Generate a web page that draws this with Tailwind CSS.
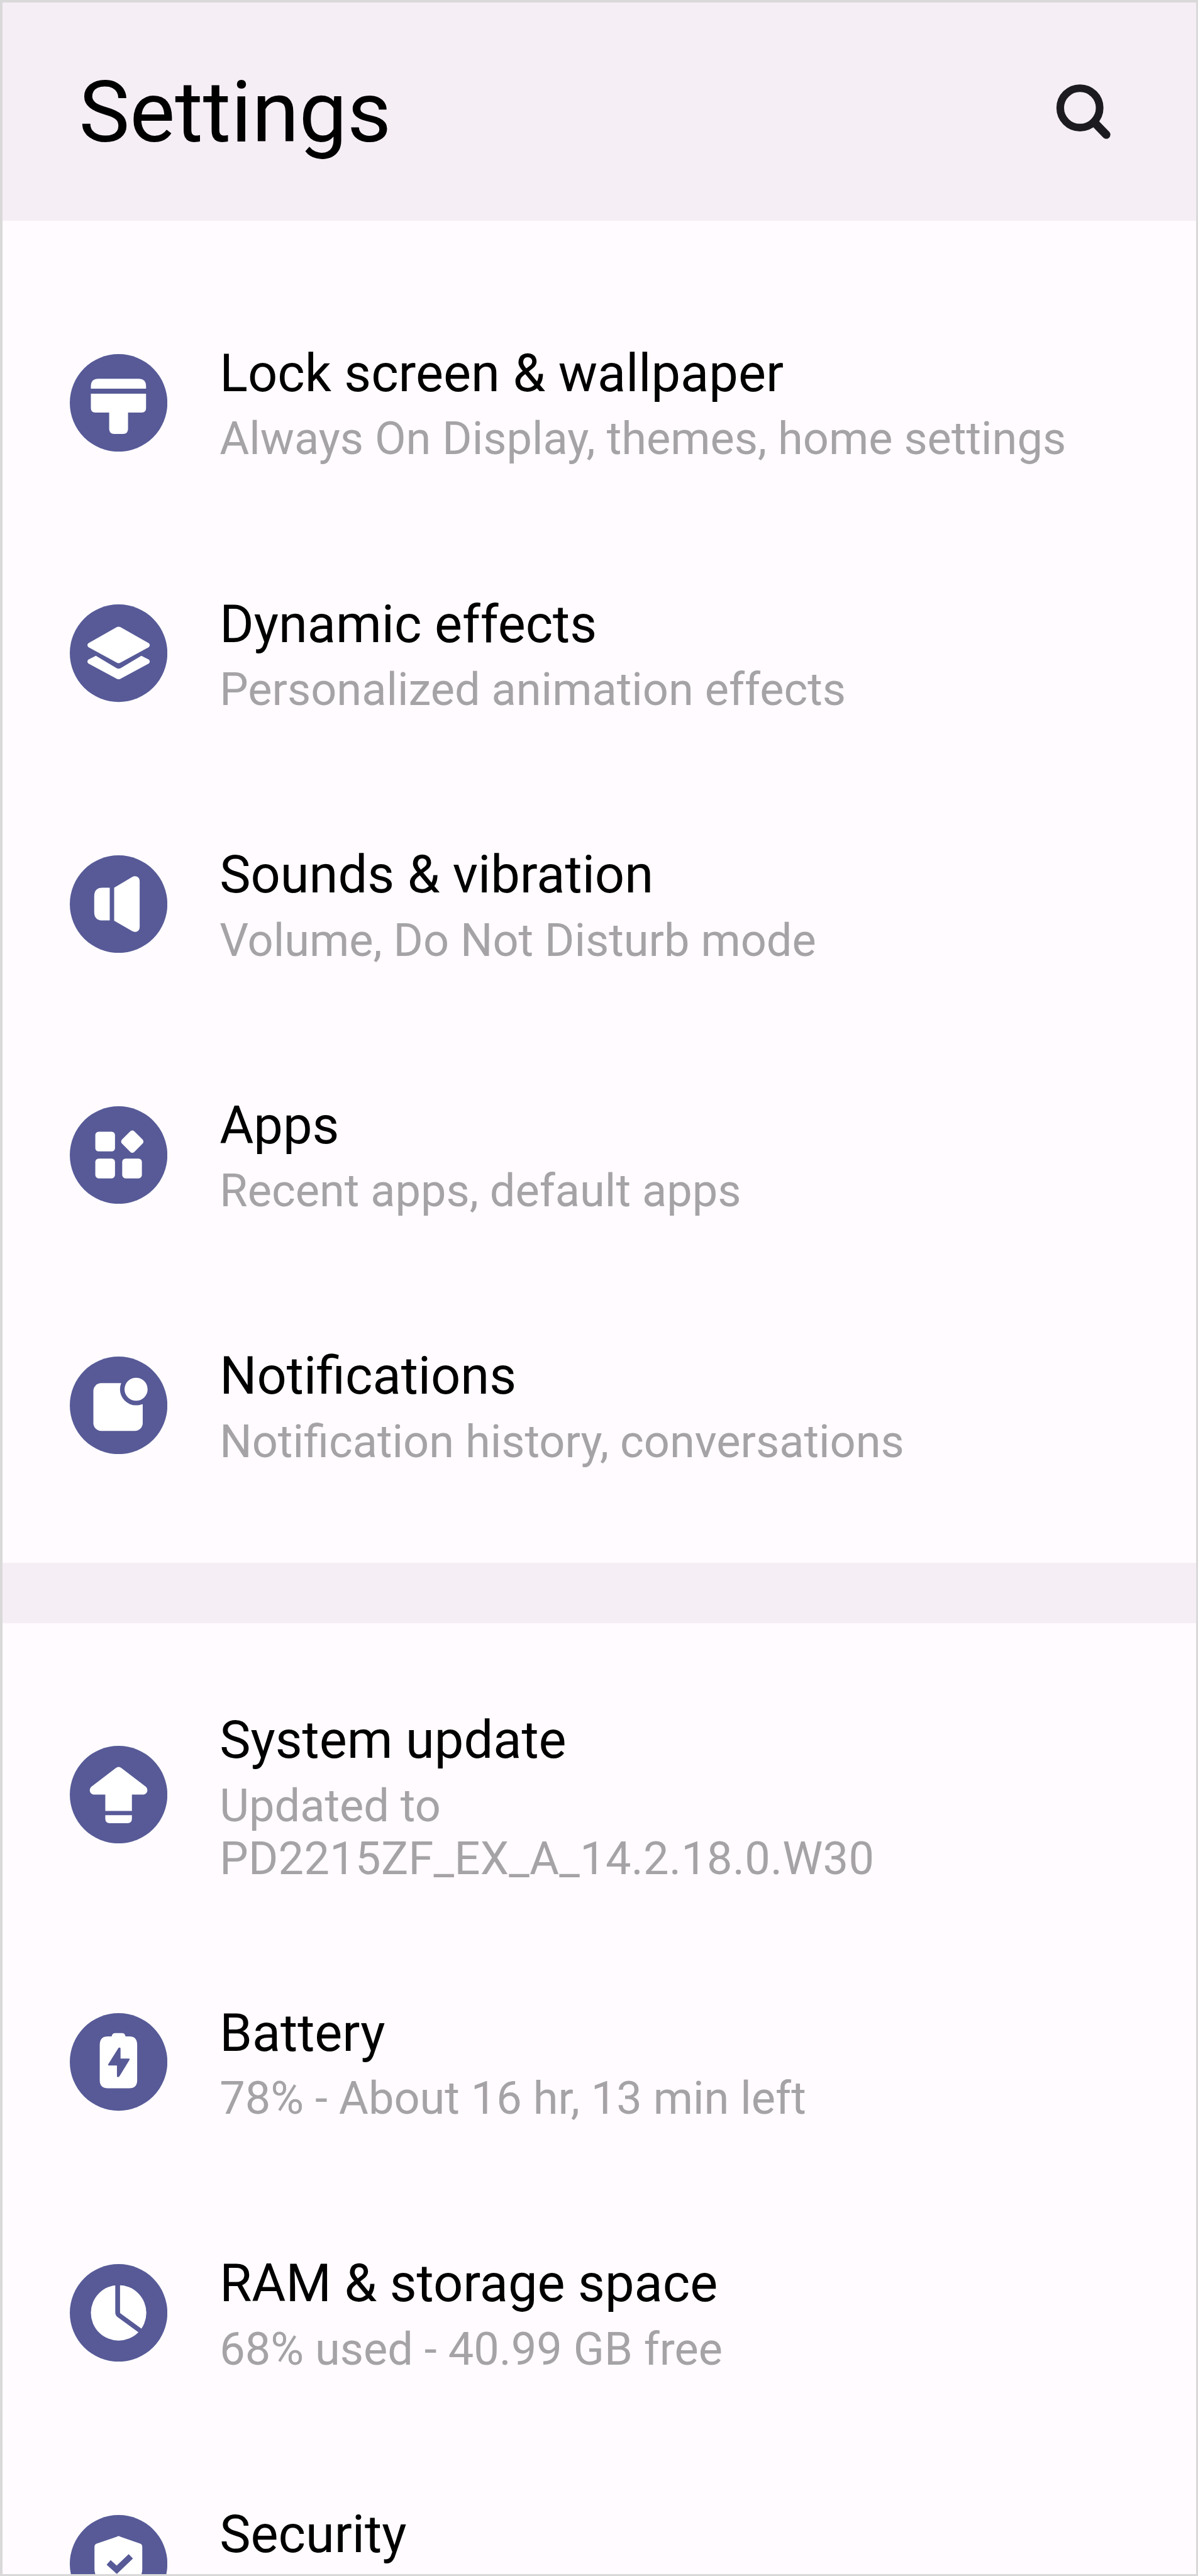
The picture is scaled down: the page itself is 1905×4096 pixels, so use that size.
<!DOCTYPE html>
<html lang="en">
<head>
  <meta charset="UTF-8">
  <meta name="viewport" content="width=device-width, initial-scale=1.0">
  <title>Settings</title>
  <script src="https://cdn.jsdelivr.net/npm/@tailwindcss/browser@4"></script>
</head>
<body class="bg-[#d9d9d9]">
  <div class="w-[1905px] h-[4096px] p-[3.5px] overflow-hidden font-['Roboto',sans-serif] text-black">
    <div class="h-full overflow-hidden bg-[#fffbff]">
      <header class="flex items-center justify-between h-[347.5px] pl-[122px] pr-[135px] bg-[#f5eef5]">
        <h1 class="pt-[4px] text-[136px] leading-[160px]">Settings</h1>
        <svg class="w-[88px] h-[88px]" viewBox="0 0 100 100" fill="none" stroke="#1c1b20" stroke-width="13.800">
          <circle cx="43.5" cy="43.8" r="35.600"/>
          <path d="M69 69.500L91 92.200" stroke-width="15" stroke-linecap="round"/>
        </svg>
      </header>

      <main>
        <section class="h-[2133.500px] pt-[90px]">
          <a class="flex items-center h-[398.640px] pl-[107.500px]">
            <svg class="w-[155.200px] h-[155.200px] shrink-0" viewBox="0 0 176 176" fill="#fff">
              <circle cx="88" cy="88" r="88" fill="#575a97"/>
              <path d="M38 62.500V58Q38 44.500 51.500 44.500H124Q137.500 44.500 137.500 58V62.500Z"/>
              <path d="M38 71.500H137.500V97.500Q137.500 105.500 129.500 105.500H105V135Q105 144 96 144H80Q71 144 71 135V105.500H46Q38 105.500 38 97.500Z"/>
            </svg>
            <div class="ml-[83px] pt-[5px]">
              <h2 class="text-[83px] leading-[98px]">Lock screen &amp; wallpaper</h2>
              <p class="mt-[13.400px] text-[72.150px] leading-[84.400px] text-[#a5a3a6]">Always On Display, themes, home settings</p>
            </div>
          </a>
          <a class="flex items-center h-[398.640px] pl-[107.500px]">
            <svg class="w-[155.200px] h-[155.200px] shrink-0" viewBox="0 0 176 176" fill="#fff">
              <circle cx="88" cy="88" r="88" fill="#575a97"/>
              <path d="M84.500 41.200Q88 39.200 91.500 41.200L142.500 70Q146 73.500 142.500 77L91.500 105Q88 107 84.500 105L33.500 77Q30 73.500 33.500 70Z"/>
              <path d="M47 92.800L84 114.800Q88 117 92 114.800L129 92.800L142.500 99.500Q146 103 142.500 106.500L91.500 134Q88 136 84.500 134L33.500 106.500Q30 103 33.500 99.500Z"/>
            </svg>
            <div class="ml-[83px] pt-[5px]">
              <h2 class="text-[83px] leading-[98px]">Dynamic effects</h2>
              <p class="mt-[13.400px] text-[72.150px] leading-[84.400px] text-[#a5a3a6]">Personalized animation effects</p>
            </div>
          </a>
          <a class="flex items-center h-[398.640px] pl-[107.500px]">
            <svg class="w-[155.200px] h-[155.200px] shrink-0" viewBox="0 0 176 176" fill="#fff">
              <circle cx="88" cy="88" r="88" fill="#575a97"/>
              <path d="M72 58.500V117.500H59Q44 117.500 44 102V74Q44 58.500 59 58.500Z"/>
              <path d="M80 58.500L112 39.500C119 35.500 126 39 126 47V129C126 137 119 140.500 112 136.500L80 118Z"/>
            </svg>
            <div class="ml-[83px] pt-[5px]">
              <h2 class="text-[83px] leading-[98px]">Sounds &amp; vibration</h2>
              <p class="mt-[13.400px] text-[72.150px] leading-[84.400px] text-[#a5a3a6]">Volume, Do Not Disturb mode</p>
            </div>
          </a>
          <a class="flex items-center h-[398.640px] pl-[107.500px]">
            <svg class="w-[155.200px] h-[155.200px] shrink-0" viewBox="0 0 176 176" fill="#fff">
              <circle cx="88" cy="88" r="88" fill="#575a97"/>
              <rect x="46" y="46" width="35.500" height="35.500" rx="6"/>
              <rect x="46" y="94.500" width="35.500" height="35.500" rx="6"/>
              <rect x="94.500" y="94.500" width="35.500" height="35.500" rx="6"/>
              <rect x="97" y="48" width="31.400" height="31.400" rx="5" transform="rotate(45 112.700 63.700)"/>
            </svg>
            <div class="ml-[83px] pt-[5px]">
              <h2 class="text-[83px] leading-[98px]">Apps</h2>
              <p class="mt-[13.400px] text-[72.150px] leading-[84.400px] text-[#a5a3a6]">Recent apps, default apps</p>
            </div>
          </a>
          <a class="flex items-center h-[398.640px] pl-[107.500px]">
            <svg class="w-[155.200px] h-[155.200px] shrink-0" viewBox="0 0 176 176" fill="#fff">
              <circle cx="88" cy="88" r="88" fill="#575a97"/>
              <rect x="42.500" y="48" width="89" height="86" rx="14"/>
              <rect x="112" y="44" width="24" height="42" fill="#575a97"/>
              <circle cx="119.500" cy="59" r="29" fill="#575a97"/>
              <circle cx="119.500" cy="59" r="20.800"/>
            </svg>
            <div class="ml-[83px] pt-[5px]">
              <h2 class="text-[83px] leading-[98px]">Notifications</h2>
              <p class="mt-[13.400px] text-[72.150px] leading-[84.400px] text-[#a5a3a6]">Notification history, conversations</p>
            </div>
          </a>
        </section>

        <div class="h-[96px] bg-[#f5eef5]"></div>

        <section class="pt-[47.600px]">
          <a class="flex items-center h-[451.600px] pl-[107.500px]">
            <svg class="w-[155.200px] h-[155.200px] shrink-0" viewBox="0 0 176 176" fill="#fff">
              <circle cx="88" cy="88" r="88" fill="#575a97"/>
              <path d="M83 40Q88 36 93 40L136 73C143 78 140 88 132 88H112V117.500H64V88H44C36 88 33 78 40 73Z"/>
              <path d="M64 125H112V131Q112 139.500 104 139.500H72Q64 139.500 64 131Z"/>
            </svg>
            <div class="ml-[83px] pt-[9px]">
              <h2 class="text-[83px] leading-[98px]">System update</h2>
              <p class="mt-[13.400px] text-[72.150px] leading-[84.400px] text-[#a5a3a6]">Updated to<br><span class="tracking-[0.28px]">PD2215ZF_EX_A_14.2.18.0.W30</span></p>
            </div>
          </a>
          <a class="flex items-center h-[398.640px] pl-[107.500px]">
            <svg class="w-[155.200px] h-[155.200px] shrink-0" viewBox="0 0 176 176" fill="#fff">
              <circle cx="88" cy="88" r="88" fill="#575a97"/>
              <path d="M54 57Q54 42 69 42H75.500Q76.500 36 82 36H94Q99.500 36 100.500 42H107Q121.500 42 121.500 57V121Q121.500 135.500 107 135.500H69Q54 135.500 54 121Z"/>
              <path fill="#575a97" d="M88 62.500Q91.500 61 91.500 64V82H106Q109 82 107.500 84.500L89.500 114Q85 118 85 112.500V94.500H71Q68 94.500 69.500 92Z"/>
            </svg>
            <div class="ml-[83px] pt-[5px]">
              <h2 class="text-[83px] leading-[98px]">Battery</h2>
              <p class="mt-[13.400px] text-[72.150px] leading-[84.400px] text-[#a5a3a6]">78% - About 16 hr, 13 min left</p>
            </div>
          </a>
          <a class="flex items-center h-[398.640px] pl-[107.500px]">
            <svg class="w-[155.200px] h-[155.200px] shrink-0" viewBox="0 0 176 176" fill="#fff">
              <circle cx="88" cy="88" r="88" fill="#575a97"/>
              <circle cx="88" cy="88" r="50"/>
              <path d="M86.300 34V87Q86.300 90.500 89 92.500L131 123" fill="none" stroke="#575a97" stroke-width="8.600"/>
            </svg>
            <div class="ml-[83px] pt-[5px]">
              <h2 class="text-[83px] leading-[98px]">RAM &amp; storage space</h2>
              <p class="mt-[13.400px] text-[72.150px] leading-[84.400px] text-[#a5a3a6]">68% used - 40.99 GB free</p>
            </div>
          </a>
          <a class="flex items-center h-[398.640px] pl-[107.500px]">
            <svg class="w-[155.200px] h-[155.200px] shrink-0" viewBox="0 0 176 176" fill="#fff">
              <circle cx="88" cy="88" r="88" fill="#575a97"/>
              <path d="M85 39Q88 37 91 39L127 51.500Q130.700 53 130.700 57V98Q130.700 122 88 138Q44.500 122 44.500 98V57Q44.500 53 48.500 51.500Z"/>
              <path d="M70 85.500L84.700 98.800L110 74.500" fill="none" stroke="#575a97" stroke-width="11"/>
            </svg>
            <div class="ml-[83px] pt-[5px] h-[200.800px]">
              <h2 class="text-[83px] leading-[98px]">Security</h2>
            </div>
          </a>
        </section>
      </main>
    </div>
  </div>
</body>
</html>
